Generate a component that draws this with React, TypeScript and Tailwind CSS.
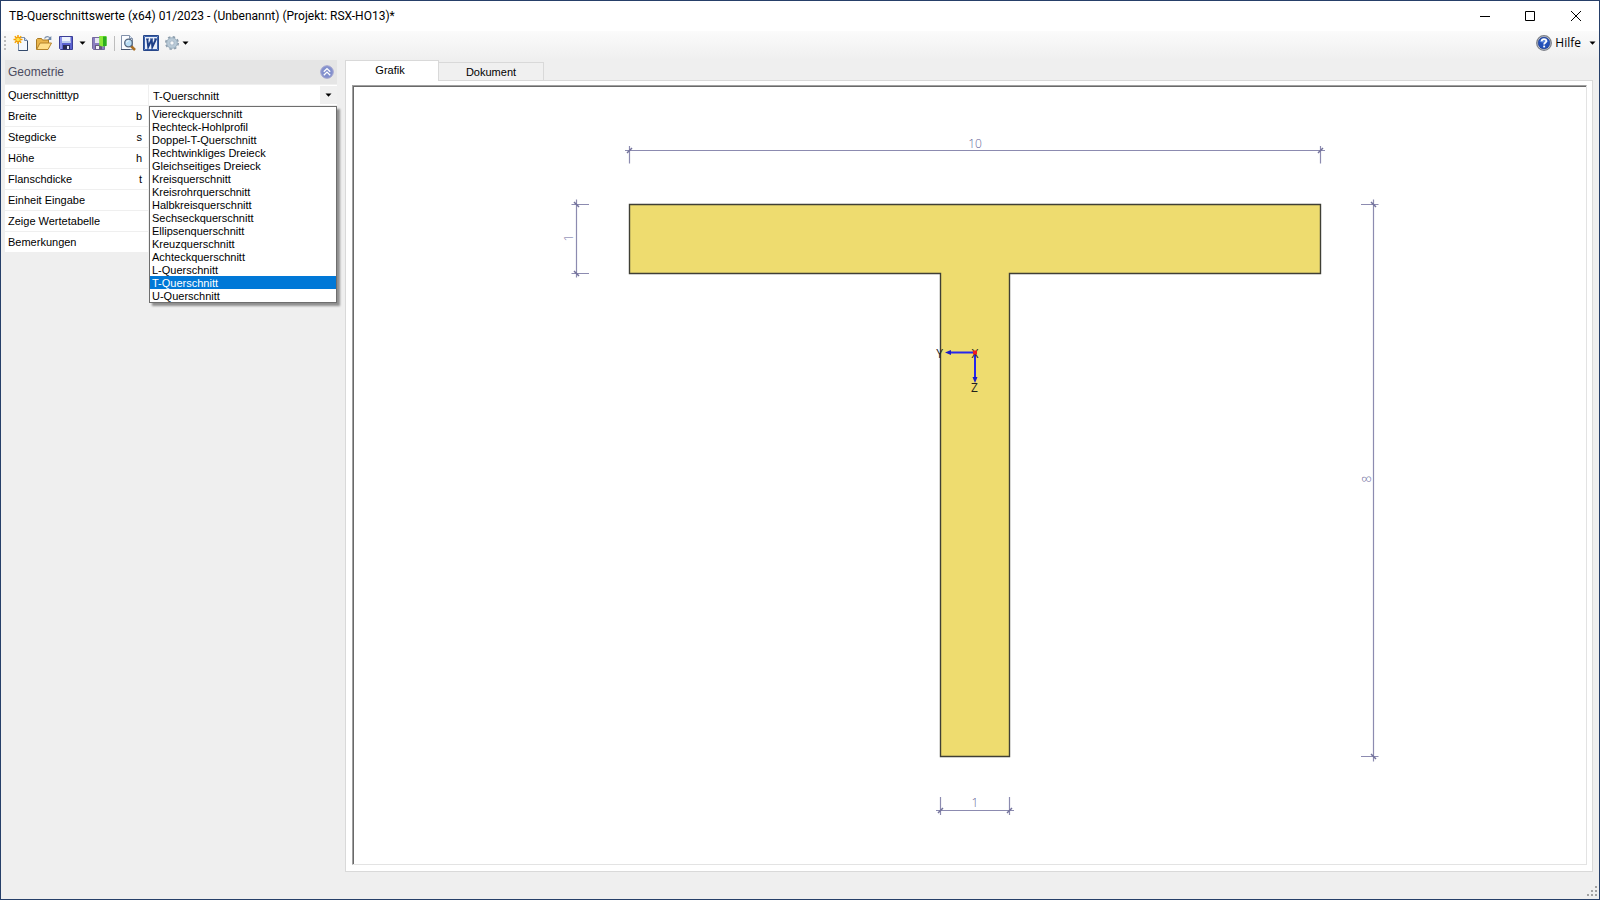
import { useState } from "react";
import type { ReactNode } from "react";

const sectionTypes = [
  "Viereckquerschnitt",
  "Rechteck-Hohlprofil",
  "Doppel-T-Querschnitt",
  "Rechtwinkliges Dreieck",
  "Gleichseitiges Dreieck",
  "Kreisquerschnitt",
  "Kreisrohrquerschnitt",
  "Halbkreisquerschnitt",
  "Sechseckquerschnitt",
  "Ellipsenquerschnitt",
  "Kreuzquerschnitt",
  "Achteckquerschnitt",
  "L-Querschnitt",
  "T-Querschnitt",
  "U-Querschnitt",
];

const fields = [
  { id: "b", label: "Breite", symbol: "b" },
  { id: "s", label: "Stegdicke", symbol: "s" },
  { id: "h", label: "Höhe", symbol: "h" },
  { id: "t", label: "Flanschdicke", symbol: "t" },
  { id: "unit", label: "Einheit Eingabe", symbol: "" },
  { id: "table", label: "Zeige Wertetabelle", symbol: "" },
  { id: "notes", label: "Bemerkungen", symbol: "" },
];

function Caret() {
  return (
    <svg width="7" height="4" viewBox="0 0 7 4" className="block shrink-0">
      <path d="M0.5 0.5h6L3.5 3.7z" fill="#000" />
    </svg>
  );
}

function ToolButton({ label, children }: { label: string; children: ReactNode }) {
  return (
    <button type="button" aria-label={label} className="block shrink-0">
      {children}
    </button>
  );
}

function NewIcon() {
  return (
    <svg width="16" height="16" viewBox="0 0 16 16" className="block">
      <path d="M5.5 2.5h6l3 3v10h-9z" fill="#f4f8fe" stroke="#7f93b3" />
      <path d="M11.5 2.5v3h3" fill="#c9d8ee" stroke="#6f86a8" />
      <path d="M14.5 6v9.5h-9" fill="none" stroke="#33496b" />
      <path d="M5 0v9M0.5 4.5h9M1.8 1.3l6.4 6.4M8.2 1.3l-6.4 6.4" stroke="#f5a300" strokeWidth="1.5" />
      <circle cx="5" cy="4.5" r="2.3" fill="#ffe34a" stroke="#f08c00" strokeWidth="0.8" />
    </svg>
  );
}

function OpenIcon() {
  return (
    <svg width="16" height="16" viewBox="0 0 16 16" className="block">
      <path d="M0.500 14.500v-10l1-1h4l1 1.500h6v3" fill="#e9b54c" stroke="#a87a25" />
      <path d="M0.700 14.500l3.300-6.500h11.500l-3.500 6.500z" fill="#ffdf8a" stroke="#b5832a" />
      <path d="M8.500 3.500c1.500-2.500 4-2.500 5.500-0.500" fill="none" stroke="#7f93ad" strokeWidth="1.200" />
      <path d="M15.300 1v4h-4z" fill="#6d87a8" />
    </svg>
  );
}

function SaveIcon() {
  return (
    <svg width="16" height="16" viewBox="0 0 16 16" className="block">
      <path d="M0.500 1.500h13v13h-12l-1-1z" fill="#5b62cf" stroke="#3b3f96" />
      <path d="M1 2h2v12h-2z" fill="#8b92ea" />
      <path d="M3 2h8.500v6h-8.500z" fill="#eef3fd" />
      <path d="M3 6h8.500v2h-8.500z" fill="#bdcdf0" />
      <path d="M4 10h7v4.500h-7z" fill="#2a2c55" />
      <path d="M8 11h2v3h-2z" fill="#e6eafa" />
    </svg>
  );
}

function SaveExitIcon() {
  return (
    <svg width="16" height="16" viewBox="1 0 16 16" className="block">
      <path d="M1.500 2.500h12v12h-11l-1-1z" fill="#8a7dc0" stroke="#75699f" />
      <path d="M4 3h7v5h-7z" fill="#e6e6f2" />
      <path d="M4 10h7v4.500h-7z" fill="#66597f" />
      <path d="M5 11h3v3h-3z" fill="#f2f2f8" />
      <path d="M8.500 1h7v9.500l-2.500 1.500v-1h-4.500z" fill="#54cf2b" />
      <path d="M8.500 1h3.500v11l-3.500-1.700z" fill="#8be838" />
      <path d="M12 2h3.500v9h-3.500z" fill="#2cae1f" />
    </svg>
  );
}

function PreviewIcon() {
  return (
    <svg width="16" height="16" viewBox="1 0 16 16" className="block">
      <path d="M1.500 0.500h8l3 3v11h-11z" fill="#fafcff" stroke="#8291aa" />
      <path d="M9.500 0.500v3h3" fill="#dbe5f4" stroke="#8291aa" />
      <path d="M1 14.500h9" stroke="#46556f" />
      <path d="M11 11l4 4" stroke="#a96e24" strokeWidth="2.500" />
      <circle cx="8.500" cy="8" r="3.800" fill="#b9dcf3" stroke="#55677f" strokeWidth="1.300" />
      <path d="M6.500 7.500c.3-1.200 1.200-1.700 2.200-1.700" fill="none" stroke="#fff" />
    </svg>
  );
}

function WordIcon() {
  return (
    <svg width="16" height="16" viewBox="0 0 16 16" className="block">
      <path d="M0.500 0.500h15v15h-15z" fill="#fff" stroke="#27478a" />
      <path d="M1.500 1.500h13v13h-13z" fill="#e9effa" stroke="#3c63ad" />
      <path d="M3 4h3M7 4h3M11 4h3" stroke="#1d3f87" strokeWidth="1.200" />
      <path d="M4.300 4l.9 8L8.700 4.300l.6 7.700L13 4" fill="none" stroke="#1d3f87" strokeWidth="1.900" />
    </svg>
  );
}

function GearIcon() {
  return (
    <svg width="16" height="16" viewBox="0 0 16 16" className="block">
      <circle cx="7" cy="8" r="6" fill="none" stroke="#8b9cab" strokeWidth="2" strokeDasharray="2.400 2.310" />
      <circle cx="7" cy="8" r="4" fill="none" stroke="#b9cad7" strokeWidth="3.200" />
      <circle cx="7" cy="8" r="5.300" fill="none" stroke="#94a7b7" strokeWidth="0.700" />
      <circle cx="7" cy="8" r="2.200" fill="#f7f8f9" stroke="#8ea5b9" strokeWidth="0.800" />
    </svg>
  );
}

function HelpIcon() {
  return (
    <svg width="16" height="16" viewBox="0 0 16 16" className="block">
      <circle cx="8" cy="8" r="7.300" fill="#dfe2e8" stroke="#7d8088" strokeWidth="1.300" />
      <circle cx="8" cy="8" r="5.900" fill="#2350b8" stroke="#1b357c" strokeWidth="0.600" />
      <path d="M3.500 6.500a5 5 0 0 1 9 0c-2 1.500-7 1.500-9 0z" fill="#5c86dc" />
      <path d="M5.700 6.300c0-3 4.600-2.900 4.600-.2 0 1.700-2.200 1.600-2.200 3.400" fill="none" stroke="#fff" strokeWidth="1.800" />
      <path d="M7.200 10.600h1.900v1.800h-1.900z" fill="#fff" />
    </svg>
  );
}

function CollapseIcon() {
  return (
    <svg width="14" height="14" viewBox="0 0 14 14" className="block">
      <circle cx="7" cy="7" r="6.300" fill="#8390cd" stroke="#a4a5cf" />
      <path d="M3.800 6.800L7 3.600l3.200 3.200M3.800 10.300L7 7.100l3.200 3.200" fill="none" stroke="#fff" strokeWidth="1.300" />
    </svg>
  );
}

function TitleBar() {
  return (
    <header className="flex h-[30px] shrink-0 items-center justify-between bg-white pl-2">
      <h1 className="font-[Roboto,'Open_Sans',sans-serif] text-xs text-black">
        TB-Querschnittswerte (x64) 01/2023 - (Unbenannt) (Projekt: RSX-HO13)*
      </h1>
      <div className="flex">
        <button type="button" aria-label="Minimieren" className="flex h-[30px] w-[45px] items-center justify-center">
          <svg width="10" height="10" viewBox="0 0 10 10"><path d="M0 5.500h10" stroke="#000" /></svg>
        </button>
        <button type="button" aria-label="Maximieren" className="flex h-[30px] w-[45px] items-center justify-center">
          <svg width="10" height="10" viewBox="0 0 10 10"><path d="M0.500 0.500h9v9h-9z" fill="none" stroke="#000" /></svg>
        </button>
        <button type="button" aria-label="Schließen" className="flex h-[30px] w-[47px] items-center justify-center">
          <svg width="10" height="10" viewBox="0 0 10 10"><path d="M0 0l10 10M10 0L0 10" stroke="#000" /></svg>
        </button>
      </div>
    </header>
  );
}

function Toolbar() {
  return (
    <div role="toolbar" className="flex h-[29px] shrink-0 items-start justify-between bg-linear-to-b from-[#fbfbfb] to-[#efefef] pt-1">
      <div className="flex h-4 items-center">
        <svg width="12" height="16" viewBox="0 0 12 16" className="block">
          <path d="M3 1h2v2h-2zM3 5h2v2h-2zM3 9h2v2h-2zM3 13h2v2h-2z" fill="#bdbdbd" />
        </svg>
        <div className="flex items-center gap-[7px]">
          <ToolButton label="Neu"><NewIcon /></ToolButton>
          <ToolButton label="Öffnen"><OpenIcon /></ToolButton>
          <ToolButton label="Speichern"><SaveIcon /></ToolButton>
        </div>
        <button type="button" aria-label="Speicheroptionen" className="pr-[6px] pl-1"><Caret /></button>
        <div className="flex items-center gap-[6px]">
          <ToolButton label="Speichern und beenden"><SaveExitIcon /></ToolButton>
          <span className="h-[15px] w-px bg-[#bdbdbd]" />
          <ToolButton label="Druckvorschau"><PreviewIcon /></ToolButton>
          <ToolButton label="Word"><WordIcon /></ToolButton>
          <ToolButton label="Einstellungen"><GearIcon /></ToolButton>
        </div>
        <button type="button" aria-label="Weitere Einstellungen" className="px-px"><Caret /></button>
      </div>
      <button type="button" className="flex h-4 items-center gap-[3px] pr-[3px] font-['Open_Sans','Noto_Sans',sans-serif] text-xs text-black">
        <HelpIcon />
        <span className="pr-[5px]">Hilfe</span>
        <Caret />
      </button>
    </div>
  );
}

function GeometryPanel() {
  const [selected, setSelected] = useState("T-Querschnitt");
  return (
    <aside className="w-[332px] shrink-0">
      <div className="flex h-6 items-center justify-between bg-[#e5e5e5] pr-[3px] pl-[3px]">
        <h2 className="text-xs text-[#4b4b60]">Geometrie</h2>
        <button type="button" aria-label="Einklappen"><CollapseIcon /></button>
      </div>
      <form className="relative flex flex-col gap-px pt-px">
        <div className="flex h-5 gap-px">
          <label htmlFor="type" className="flex w-[143px] items-center bg-white pl-[3px]">Querschnitttyp</label>
          <div className="flex flex-1 bg-white">
            <select
              id="type"
              value={selected}
              onChange={(e) => setSelected(e.target.value)}
              className="min-w-0 flex-1 appearance-none bg-white pt-px pl-1 outline-none"
            >
              {sectionTypes.map((t) => (
                <option key={t}>{t}</option>
              ))}
            </select>
            <span className="my-px flex w-[17px] items-center justify-center bg-[#f0f0f0]"><Caret /></span>
          </div>
        </div>
        {fields.map((f) => (
          <div key={f.id} className="flex h-5 gap-px">
            <label htmlFor={f.id} className="flex w-[143px] items-center justify-between bg-white pr-[6px] pl-[3px]">
              <span>{f.label}</span>
              <span>{f.symbol}</span>
            </label>
            <input id={f.id} className="min-w-0 flex-1 bg-white px-1 outline-none" />
          </div>
        ))}
        <ul
          role="listbox"
          aria-label="Querschnitttyp"
          className="absolute top-[22px] right-0 left-36 border border-[#6e6e6e] bg-white shadow-[3px_3px_2px_rgba(0,0,0,0.4)]"
        >
          {sectionTypes.map((t) => (
            <li
              key={t}
              role="option"
              aria-selected={t === selected}
              onClick={() => setSelected(t)}
              className={
                t === selected
                  ? "h-[13px] bg-[#0078d7] pl-[2px] leading-[14px] text-white"
                  : "h-[13px] pl-[2px] leading-[14px]"
              }
            >
              {t}
            </li>
          ))}
        </ul>
      </form>
    </aside>
  );
}

function SectionDrawing() {
  return (
    <svg viewBox="354 87 1232 777" className="block h-full w-full font-['Open_Sans','Noto_Sans',sans-serif] text-xs">
      <path
        d="M629.500 204.500H1320.500V273.500H1009.500V756.500H940.500V273.500H629.500Z"
        fill="#eedc6f"
        stroke="#3f3f35"
        strokeWidth="1.400"
      />
      <g fill="none" stroke="#8c8bb0" strokeWidth="1.200">
        <path d="M625 150.500H1325M629.500 146V163.500M1320.500 146V163.500" />
        <path d="M576.500 199.500V277.500M571.500 204.500H589M571.500 273.500H589" />
        <path d="M1373.500 199.500V761.500M1361 204.500H1378.500M1361 756.500H1378.500" />
        <path d="M936 810.500H1014M940.500 797V815M1009.500 797V815" />
      </g>
      <g fill="none" stroke="#74739c" strokeWidth="1.500">
        <path d="M627 153l5-5M1318 153l5-5M938 813l5-5M1007 813l5-5" />
        <path d="M574 202l5 5M574 271l5 5M1371 202l5 5M1371 754l5 5" />
      </g>
      <g fill="#67669a" textAnchor="middle" className="font-light">
        <text x="975" y="148">10</text>
        <text x="975" y="807">1</text>
        <text transform="translate(573 238) rotate(-90)">1</text>
        <text transform="translate(1371 479) rotate(-90)">8</text>
      </g>
      <path d="M975 352.500H950M975 352.500V379" stroke="#2626ee" strokeWidth="2" />
      <path d="M945 352.500l6-2.500v5zM975 383l-2.500-6h5z" fill="#1c1cc8" />
      <g fill="#22221c" textAnchor="middle">
        <text x="939.500" y="358">Y</text>
        <text x="975" y="358">X</text>
        <text x="974.500" y="392">Z</text>
      </g>
      <path d="M973 350.500h4v4h-4z" fill="#f01c1c" />
    </svg>
  );
}

function Workspace() {
  return (
    <main className="flex min-w-0 flex-1 flex-col">
      <div role="tablist" className="flex h-5 items-end">
        <button
          type="button"
          role="tab"
          aria-selected="true"
          className="z-10 -mb-px h-[21px] w-[94px] border border-b-0 border-[#d9d9d9] bg-white pr-1 pb-[2px]"
        >
          Grafik
        </button>
        <button
          type="button"
          role="tab"
          aria-selected="false"
          className="h-[18px] w-[105px] border border-b-0 border-l-0 border-[#d9d9d9] bg-[#f0f0f0]"
        >
          Dokument
        </button>
      </div>
      <div className="flex min-h-0 flex-1 flex-col border border-[#d9d9d9] bg-white pt-1 pr-[5px] pb-[6px] pl-[6px]">
        <div className="min-h-0 flex-1 border-t border-r border-b border-l border-t-[#a0a0a0] border-r-[#e3e3e3] border-b-[#e3e3e3] border-l-[#a0a0a0]">
          <div className="h-full border-t border-l border-[#696969]">
            <SectionDrawing />
          </div>
        </div>
      </div>
    </main>
  );
}

export default function App() {
  return (
    <div className="flex h-screen flex-col border border-[#263f69] bg-[#efefef] font-['Liberation_Sans',Arial,sans-serif] text-[11px] leading-4 text-black">
      <TitleBar />
      <Toolbar />
      <div className="flex min-h-0 flex-1 gap-2 pr-[6px] pl-1">
        <GeometryPanel />
        <Workspace />
      </div>
      <footer className="flex h-[27px] shrink-0 items-end justify-end">
        <svg width="14" height="14" viewBox="0 0 14 14" className="block">
          <path d="M10 1h2v2h-2zM6 5h2v2h-2zM10 5h2v2h-2zM2 9h2v2h-2zM6 9h2v2h-2zM10 9h2v2h-2z" fill="#a2a2a2" />
        </svg>
      </footer>
    </div>
  );
}
